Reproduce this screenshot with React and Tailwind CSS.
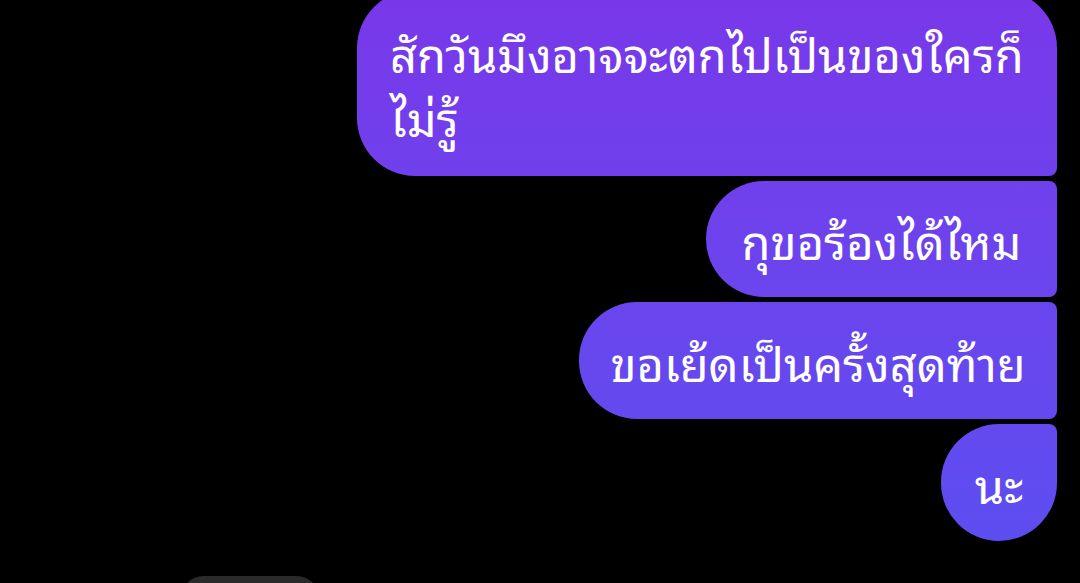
const messages = [
  {
    id: 1,
    lines: ["สักวันมึงอาจจะตกไปเป็นของใครก็", "ไม่รู้"],
    shape: "rounded-tl-[58px] rounded-tr-[58px] rounded-br-[8px] rounded-bl-[58px]",
    box: "w-[700px] flex-col pt-[30px] pb-[28px]",
  },
  {
    id: 2,
    lines: ["กุขอร้องได้ไหม"],
    shape: "rounded-tl-[58px] rounded-tr-[8px] rounded-br-[8px] rounded-bl-[58px]",
    box: "h-[116px] w-[351px] items-center justify-center",
  },
  {
    id: 3,
    lines: ["ขอเย้ดเป็นครั้งสุดท้าย"],
    shape: "rounded-tl-[58px] rounded-tr-[8px] rounded-br-[8px] rounded-bl-[58px]",
    box: "h-[117px] w-[478px] items-center justify-center",
  },
  {
    id: 4,
    lines: ["นะ"],
    shape: "rounded-tl-[58px] rounded-tr-[8px] rounded-br-[58px] rounded-bl-[58px]",
    box: "h-[117px] w-[116px] items-center justify-center",
  },
];

function Bubble({ m }) {
  return (
    <div
      className={`flex bg-fixed bg-linear-to-b from-[#7838ea] to-[#5a4ff1] px-[33px] text-white ${m.shape} ${m.box}`}
    >
      {m.lines.map((line) => (
        <p key={line} className="whitespace-nowrap text-[47px] leading-[64px]">
          {line}
        </p>
      ))}
    </div>
  );
}

export default function App() {
  return (
    <div
      className="flex h-[583px] w-[1080px] flex-col overflow-hidden bg-black"
      style={{ fontFamily: '"Noto Sans Thai Looped", "Noto Sans Thai", "Noto Sans", sans-serif' }}
    >
      <div className="-mt-[10px] flex flex-col items-end gap-[5px] pr-[23px]">
        {messages.map((m) => (
          <Bubble key={m.id} m={m} />
        ))}
      </div>
      <div className="ml-[180px] mt-[35px] h-[48px] w-[140px] shrink-0 rounded-[28px] bg-[#2a2a2a]" />
    </div>
  );
}
